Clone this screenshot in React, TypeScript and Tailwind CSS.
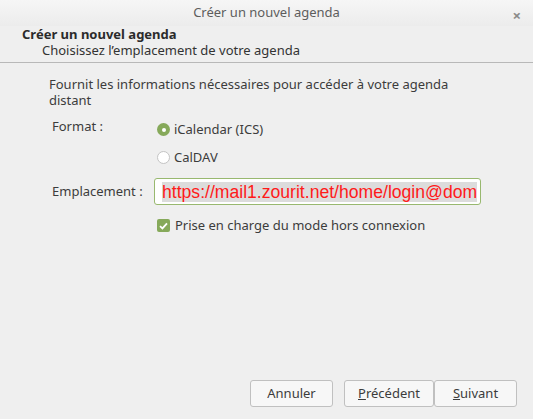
import React from 'react';

export default function App() {
  return (
    <div className="flex h-[419px] w-[533px] flex-col overflow-hidden bg-[#efefef] text-[13px] text-[#3c3c3c]" style={{ fontFamily: '"Noto Sans", "DejaVu Sans", sans-serif' }}>
      {/* title bar */}
      <div className="relative flex h-[26px] shrink-0 items-center justify-center bg-gradient-to-b from-[#f6f6f6] to-[#ececec] text-[#5d5d5d]">
        <span>Créer un nouvel agenda</span>
        <span className="absolute right-[12px] top-[4px] text-[15px] font-bold text-[#8a8a8a]">×</span>
      </div>

      {/* wizard header */}
      <div className="h-[37px] shrink-0 border-b border-[#b8b8b8] pl-[22px]">
        <div className="leading-[15px] font-bold text-[#2b2b2b] pt-[1px]">Créer un nouvel agenda</div>
        <div className="pl-[20px] leading-[16px] text-[#333]">Choisissez l’emplacement de votre agenda</div>
      </div>

      {/* body */}
      <div className="flex flex-1 flex-col pl-[49px] pr-[52px] pt-[13px]">
        <p className="pr-[10px] leading-[16px]">Fournit les informations nécessaires pour accéder à votre agenda distant</p>

        <div className="mt-[8px] grid grid-cols-[105px_1fr] gap-y-[11px]">
          <div className="pl-[3px] pt-[1px]">Format :</div>
          <div className="flex flex-col gap-[8px] pt-[4px]">
            <label className="flex items-center gap-[4px] pl-[3px]">
              <span className="flex h-[13px] w-[13px] items-center justify-center rounded-full bg-[#86a95a]">
                <span className="h-[4px] w-[4px] rounded-full bg-white" />
              </span>
              <span>iCalendar (ICS)</span>
            </label>
            <label className="flex items-center gap-[4px] pl-[3px]">
              <span className="h-[13px] w-[13px] rounded-full border border-[#c4c4c4] bg-white" />
              <span>CalDAV</span>
            </label>
          </div>

          <div className="flex items-center pl-[3px]">Emplacement :</div>
          <div className="flex h-[27px] items-center overflow-hidden rounded-[3px] border border-[#98b86f] bg-white px-[7px]">
            <span className="whitespace-nowrap bg-[#dcdcdc] text-[17.6px] leading-[20px] text-[#ff1a1a]" style={{ fontFamily: '"Liberation Sans", Arial, sans-serif' }}>https://mail1.zourit.net/home/login@dom</span>
          </div>

          <div />
          <label className="flex items-center gap-[5px] pl-[3px]">
            <span className="flex h-[13px] w-[13px] items-center justify-center rounded-[2px] bg-[#86a95a]">
              <svg width="9" height="8" viewBox="0 0 9 8"><path d="M1 4.2 L3.4 6.4 L8 1.4" fill="none" stroke="white" strokeWidth="1.8" /></svg>
            </span>
            <span>Prise en charge du mode hors connexion</span>
          </label>
        </div>
      </div>

      {/* buttons */}
      <div className="flex shrink-0 justify-end pb-[12px] pr-[16px]">
        <button className="mr-[11px] h-[27px] w-[83px] rounded-[3px] border border-[#c0c0c0] bg-[#f7f7f7] text-[#3c3c3c]">Annuler</button>
        <button className="h-[27px] w-[90px] rounded-[3px] border border-[#c0c0c0] bg-[#f7f7f7] text-[#3c3c3c]"><u>P</u>récédent</button>
        <button className="h-[27px] w-[83px] rounded-[3px] border border-[#c0c0c0] bg-[#f7f7f7] text-[#3c3c3c]"><u>S</u>uivant</button>
      </div>
    </div>
  );
}
